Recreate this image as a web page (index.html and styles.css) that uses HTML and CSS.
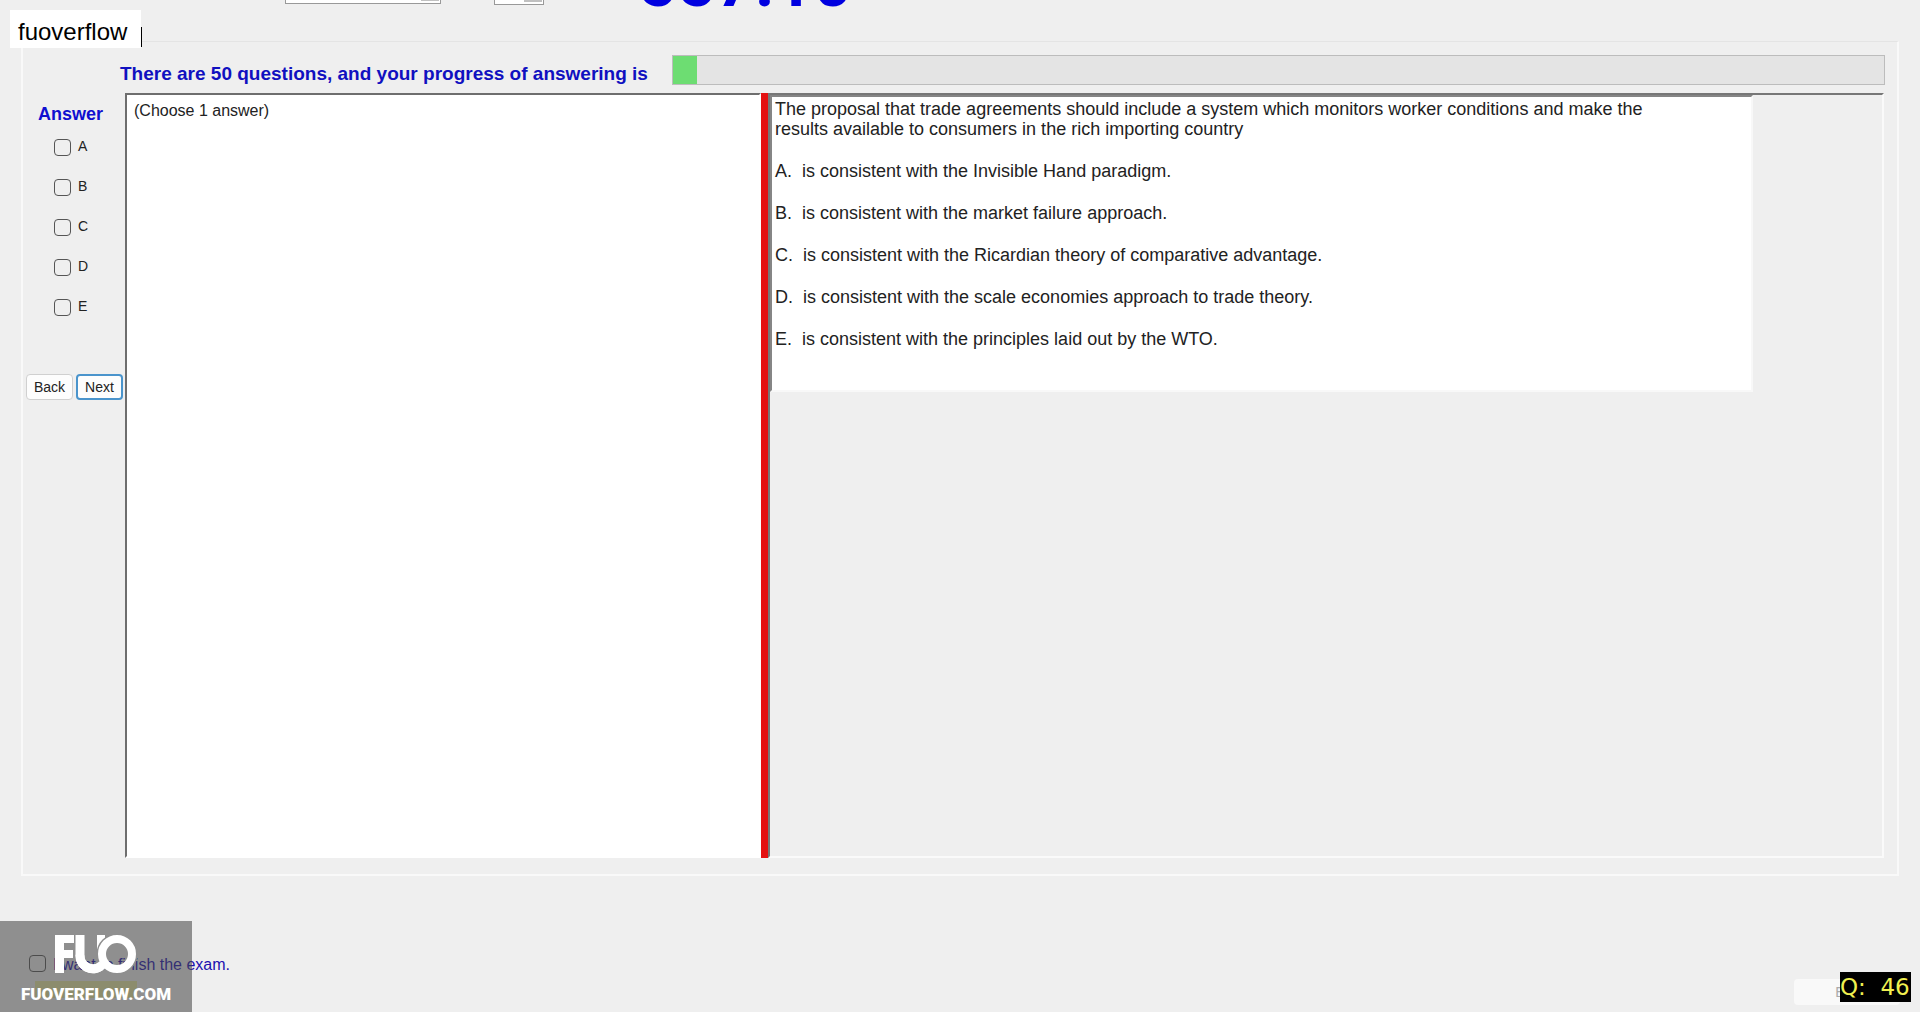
FILE: index.html
```html
<!DOCTYPE html>
<html lang="en">
<head>
<meta charset="utf-8">
<title>Exam</title>
<link rel="stylesheet" href="styles.css">
</head>
<body>
<div class="app">
  <header class="topbar">
    <select class="select select-wide" aria-label="Font"><option></option></select>
    <select class="select select-narrow" aria-label="Size"><option></option></select>
    <div class="timer">557:10</div>
  </header>

  <main class="panel">
    <div class="progress-row">
      <label class="progress-label" for="progress">There are 50 questions, and your progress of answering is</label>
      <progress class="progress" id="progress" value="1" max="50"></progress>
    </div>
    <div class="workspace">
      <form class="answers">
        <h2 class="answers-title">Answer</h2>
        <label class="choice"><input class="check" type="checkbox">A</label>
        <label class="choice"><input class="check" type="checkbox">B</label>
        <label class="choice"><input class="check" type="checkbox">C</label>
        <label class="choice"><input class="check" type="checkbox">D</label>
        <label class="choice"><input class="check" type="checkbox">E</label>
        <div class="nav">
          <button class="btn" type="button">Back</button>
          <button class="btn btn-default" type="button">Next</button>
        </div>
      </form>
      <section class="note">(Choose 1 answer)</section>
      <div class="splitter"></div>
      <section class="viewer">
        <article class="question">
          <p class="stem">The proposal that trade agreements should include a system which monitors worker conditions and make the<br>results available to consumers in the rich importing country</p>
          <p class="option">A.&nbsp; is consistent with the Invisible Hand paradigm.</p>
          <p class="option">B.&nbsp; is consistent with the market failure approach.</p>
          <p class="option">C.&nbsp; is consistent with the Ricardian theory of comparative advantage.</p>
          <p class="option">D.&nbsp; is consistent with the scale economies approach to trade theory.</p>
          <p class="option">E.&nbsp; is consistent with the principles laid out by the WTO.</p>
        </article>
      </section>
    </div>
  </main>

  <footer class="footer">
    <div class="finish-area">
      <label class="finish"><input class="check" type="checkbox">I want to finish the exam.</label>
      <div class="finish-bar"></div>
    </div>
    <button class="exit" type="button" disabled>Exit</button>
  </footer>

  <div class="tag">fuoverflow</div>
  <div class="watermark">
    <svg class="logo" viewBox="0 0 84 40" aria-hidden="true">
      <path d="M1 39V1H20V9H10V16H19V24H10V39Z" fill="#fff"/>
      <path d="M26 1V21A13 13 0 0 0 47 32" fill="none" stroke="#fff" stroke-width="9"/>
      <path d="M43 1H51V20H43Z" fill="#fff"/>
      <circle cx="63" cy="20" r="16" fill="none" stroke="#8f8f8f" stroke-width="9"/>
      <path d="M26 21A13 13 0 0 0 49 30" fill="none" stroke="#fff" stroke-width="9"/>
      <circle cx="63" cy="20" r="15" fill="none" stroke="#fff" stroke-width="8"/>
    </svg>
    <div class="watermark-text">FUOVERFLOW.COM</div>
  </div>
  <div class="counter">Q:&nbsp; 46</div>
</div>
</body>
</html>
```
FILE: styles.css
```css
* { box-sizing: border-box; }

body {
  margin: 0;
  background: #efefef;
  color: #222;
  font-family: "Liberation Sans", Arial, sans-serif;
  font-size: 16px;
}

.app {
  position: relative;
  display: flex;
  flex-direction: column;
  min-height: 100vh;
}

/* Toolbar, scrolled mostly out of view */
.topbar {
  display: flex;
  align-items: flex-end;
  height: 41px;
  padding: 0 0 23px 285px;
  overflow: hidden;
}

.select {
  flex: none;
  height: 28px;
  border: 1px solid #999;
  background: linear-gradient(#c0c0c0, #c0c0c0) right 1px top / 18px 24px no-repeat #fff;
  appearance: none;
}

.select-wide { width: 156px; margin-bottom: 14px; }
.select-narrow { width: 50px; margin: 0 0 13px 53px; }

.timer {
  margin-left: 94px;
  color: #0000e0;
  font-family: Roboto, sans-serif;
  font-size: 68px;
  font-weight: bold;
  line-height: 70px;
}

.panel {
  display: flex;
  flex: 1;
  flex-direction: column;
  margin: 0 21px;
  padding: 13px 12px 16px 3px;
  border: 2px solid #f9f9f9;
  border-top: 1px solid #e4e4e4;
}

.progress-row {
  display: flex;
  align-items: flex-end;
  margin-left: 94px;
}

.progress-label {
  width: 552px;
  color: #1010c0;
  font-size: 19px;
  font-weight: bold;
  line-height: 22px;
  white-space: nowrap;
}

.progress {
  flex: 1;
  height: 30px;
  border: 1px solid #bcbcbc;
  background: #e4e4e4;
  appearance: none;
}

.progress::-webkit-progress-bar { background: #e4e4e4; }
.progress::-webkit-progress-value { background: #6ddd72; }

.workspace {
  display: flex;
  flex: 1;
  margin-top: 8px;
}

.answers {
  display: flex;
  flex-direction: column;
  width: 99px;
}

.answers-title {
  margin: 10px 0 12px 12px;
  color: #1010d0;
  font-size: 18px;
  line-height: 22px;
}

.choice {
  display: flex;
  gap: 7px;
  height: 40px;
  padding-left: 28px;
  font-size: 14px;
  line-height: 18px;
}

.check {
  width: 17px;
  height: 17px;
  margin: 2px 0 0;
  border: 1px solid #555;
  border-radius: 4px;
  background: transparent;
  appearance: none;
}

.nav {
  display: flex;
  gap: 3px;
  margin-top: 37px;
}

.btn {
  width: 47px;
  height: 26px;
  padding: 0;
  border: 1px solid #d0d0d0;
  border-radius: 4px;
  background: #fdfdfd;
  color: #222;
  font: 14px "Liberation Sans", Arial, sans-serif;
}

.btn-default { border: 2px solid #4a94cc; }

.note {
  flex: 0 1 636px;
  padding: 6px 7px;
  border: 2px solid #fff;
  border-top-color: #6e6e6e;
  border-left-color: #6e6e6e;
  background: #fff;
  line-height: 20px;
}

.splitter {
  width: 7px;
  background: #e41010;
}

.viewer {
  flex: 1;
  margin-right: 1px;
  border: 2px solid #fafafa;
  border-top-color: #777;
  border-left-color: #777;
}

.question {
  max-width: 983px;
  height: 297px;
  padding: 2px 3px;
  border: 2px solid #f8f8f8;
  border-top-color: #858585;
  border-left-color: #858585;
  background: #fff;
  font-size: 18px;
  line-height: 20px;
}

.stem,
.option { margin: 0; }

.option { margin-top: 22px; }

.footer {
  display: flex;
  align-items: flex-start;
  justify-content: space-between;
  height: 136px;
  padding: 77px 20px 0 29px;
}

.finish {
  display: flex;
  gap: 7px;
  color: #1c10b0;
  line-height: 24px;
}

.finish-bar {
  width: 102px;
  height: 17px;
  margin: 4px 0 0 6px;
  background: #e8e8a0;
}

.exit {
  width: 106px;
  height: 26px;
  margin-top: 26px;
  border: 0;
  border-radius: 4px;
  background: #f9f9f9;
  color: #aaa;
  font: 14px "Liberation Sans", Arial, sans-serif;
}

.tag {
  position: absolute;
  top: 10px;
  left: 10px;
  width: 131px;
  height: 38px;
  padding-left: 8px;
  background: #fff;
  color: #000;
  font-size: 24px;
  line-height: 44px;
}

/* Text cursor at the end of the tag */
.tag::after {
  content: "";
  position: absolute;
  top: 17px;
  left: 131px;
  width: 1px;
  height: 20px;
  background: #000;
}

.watermark {
  position: absolute;
  bottom: 0;
  left: 0;
  display: flex;
  flex-direction: column;
  align-items: center;
  width: 192px;
  height: 91px;
  padding-top: 13px;
  background: rgba(70, 70, 70, 0.57);
}

.logo { width: 84px; height: 40px; }

.watermark-text {
  margin-top: 8px;
  color: #fff;
  font: 900 17px/24px Roboto, sans-serif;
}

.counter {
  position: absolute;
  right: 9px;
  bottom: 10px;
  width: 71px;
  height: 30px;
  background: #000;
  color: #f0f050;
  font: 23px/30px "DejaVu Sans", sans-serif;
  white-space: nowrap;
}
```
